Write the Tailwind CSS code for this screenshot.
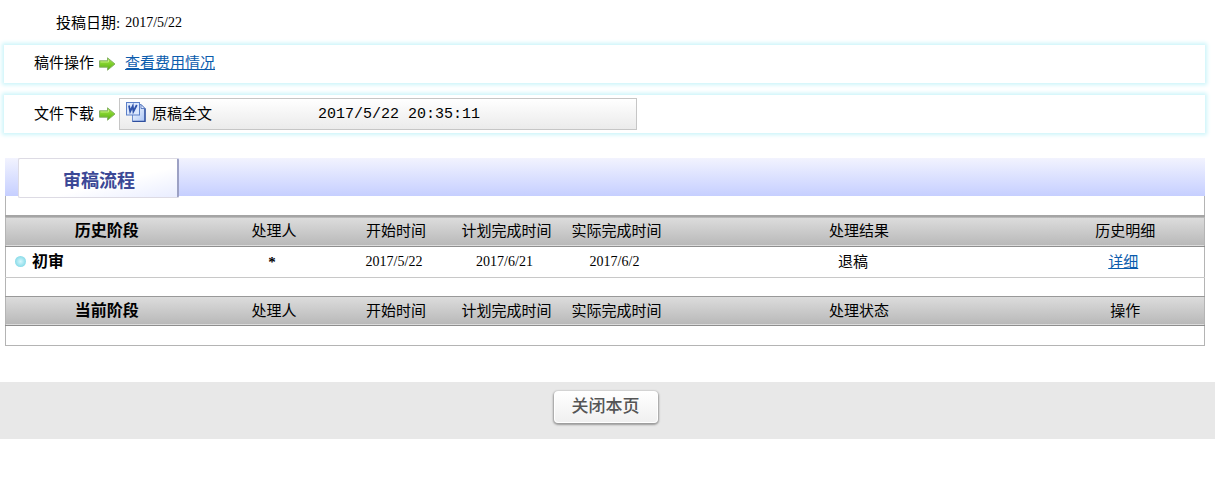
<!DOCTYPE html>
<html lang="zh-CN">
<head>
    <meta charset="UTF-8">
    <meta name="viewport" content="width=device-width, initial-scale=1.0">
    <title>审稿流程</title>
    <script src="https://cdn.jsdelivr.net/npm/@tailwindcss/browser@4"></script>
</head>
<body class="bg-white text-black text-[15px] leading-5 font-['Liberation_Serif','Noto_Sans_CJK_SC',serif]">
    <svg class="absolute size-0" aria-hidden="true">
        <defs>
            <linearGradient id="green" x1="0" y1="0" x2="0" y2="1">
                <stop offset="0" stop-color="#a5e04c"/>
                <stop offset="0.5" stop-color="#7fd02a"/>
                <stop offset="1" stop-color="#58a813"/>
            </linearGradient>
            <linearGradient id="paper" x1="0" y1="0" x2="1" y2="1">
                <stop offset="0" stop-color="#ffffff"/>
                <stop offset="1" stop-color="#a9c4f5"/>
            </linearGradient>
            <symbol id="arrow" viewBox="0 0 18 16">
                <path d="M1.5 4.8h8V1.8L17 8l-7.5 6.2v-3h-8z" fill="url(#green)" stroke="#86b366" stroke-linejoin="round"/>
                <path d="M2.5 6h8V3.8" fill="none" stroke="#cdf28e" stroke-width="0.8"/>
            </symbol>
        </defs>
    </svg>

    <!-- Submission date -->
    <div class="flex items-center h-[45px] pl-14 gap-[5px]">
        <span>投稿日期:</span>
        <span class="text-sm">2017/5/22</span>
    </div>

    <div class="flex flex-col gap-3 ml-1 mr-[10px]">
        <!-- Manuscript actions -->
        <div class="flex items-center h-[38px] pl-[30px] pb-[2px] shadow-[0_0_4px_2px_#cdf5fa]">
            <span>稿件操作</span>
            <svg class="w-[18px] h-4 ml-1 mt-[2px]" aria-hidden="true"><use href="#arrow"/></svg>
            <a href="#" class="ml-[9px] text-[#0b5cad] underline">查看费用情况</a>
        </div>

        <!-- File download -->
        <div class="flex items-center h-[38px] pl-[30px] shadow-[0_0_4px_2px_#cdf5fa]">
            <span>文件下载</span>
            <svg class="w-[18px] h-4 ml-1" aria-hidden="true"><use href="#arrow"/></svg>
            <div class="flex items-center w-[518px] h-8 ml-[3px] pl-[6px] border border-[#c6c6c6] bg-linear-to-b from-white to-[#ebebeb]">
                <svg class="w-5 h-5 mb-1" viewBox="0 0 20 20" aria-hidden="true">
                    <path d="M6.5 2.5h8.5l4 4v13H6.5z" fill="url(#paper)" stroke="#6f8fce"/>
                    <path d="M19 6.5v13H6.5" fill="none" stroke="#2f4f9e" stroke-width="1.4"/>
                    <path d="M15 2.5v4h4z" fill="#e4edff" stroke="#4468b5" stroke-width="0.8"/>
                    <rect x="0.5" y="0.5" width="13" height="12.5" fill="#dce8fd" stroke="#5c80c8"/>
                    <path d="M3 3.5l1.2 6 2.6-5.5.6 5.5 3.4-6.5" fill="none" stroke="#2f52aa" stroke-width="1.8"/>
                </svg>
                <div class="w-[172px] pl-[6px]">原稿全文</div>
                <div class="pt-[2px] font-['Liberation_Mono',monospace]">2017/5/22 20:35:11</div>
            </div>
        </div>
    </div>

    <!-- Review process -->
    <div class="ml-[5px] mr-[10px] mt-[25px]">
        <div class="flex h-[38px] pl-[13px] bg-linear-to-b from-[#f2f3fe] to-[#c6cfff]">
            <h2 class="w-[161px] h-10 pl-[2px] text-center text-lg leading-10 font-bold text-[#3b4896] font-['Noto_Sans_CJK_SC',sans-serif] border border-r-2 border-[#dddbe4] border-r-[#9ca1c4] rounded-xs bg-linear-to-br from-white from-60% to-[#e9edff]">审稿流程</h2>
        </div>
        <table class="w-full table-fixed border-collapse border border-t-0 border-[#b4b4b4] text-center">
            <colgroup>
                <col class="w-[202px]">
                <col class="w-[133px]">
                <col class="w-[111px]">
                <col class="w-[110px]">
                <col class="w-[110px]">
                <col>
                <col class="w-[158px]">
            </colgroup>
            <tbody>
                <tr class="h-5"><td colspan="7"></td></tr>
                <tr class="h-[30px] border-t-2 border-b border-t-[#a5a5a5] border-b-[#8e8e8e] bg-linear-to-b from-[#dcdcdc] to-[#b9b9b9]">
                    <th class="text-base leading-5 font-bold">历史阶段</th>
                    <th class="font-normal">处理人</th>
                    <th class="font-normal">开始时间</th>
                    <th class="font-normal">计划完成时间</th>
                    <th class="font-normal">实际完成时间</th>
                    <th class="font-normal">处理结果</th>
                    <th class="font-normal">历史明细</th>
                </tr>
                <tr class="h-[31px] border-b border-[#c8c8c8]">
                    <td class="pl-[9px]">
                        <div class="flex items-center gap-[6px] text-base leading-5 font-bold">
                            <span class="size-[11px] rounded-full bg-radial from-[#d4f7fc] to-[#63cfe0]"></span>初审
                        </div>
                    </td>
                    <td class="pr-1 font-bold">*</td>
                    <td class="pr-1 text-sm">2017/5/22</td>
                    <td class="pr-1 text-sm">2017/6/21</td>
                    <td class="pr-1 text-sm">2017/6/2</td>
                    <td class="pr-3">退稿</td>
                    <td class="pr-1"><a href="#" class="text-[#0b5cad] underline">详细</a></td>
                </tr>
                <tr class="h-[19px]"><td colspan="7"></td></tr>
                <tr class="h-[29px] border-t border-b border-t-[#999999] border-b-[#8e8e8e] bg-linear-to-b from-[#dcdcdc] to-[#b9b9b9]">
                    <th class="text-base leading-5 font-bold">当前阶段</th>
                    <th class="font-normal">处理人</th>
                    <th class="font-normal">开始时间</th>
                    <th class="font-normal">计划完成时间</th>
                    <th class="font-normal">实际完成时间</th>
                    <th class="font-normal">处理状态</th>
                    <th class="font-normal">操作</th>
                </tr>
                <tr class="h-5"><td colspan="7"></td></tr>
            </tbody>
        </table>
    </div>

    <!-- Footer -->
    <div class="flex justify-center items-center h-[57px] mt-9 pr-1 pb-[6px] bg-[#e8e8e8]">
        <button type="button" class="w-[104px] h-8 pb-1 rounded-sm border border-white bg-linear-to-b from-white to-[#f0f0f0] text-[17px] leading-5 font-medium text-[#555555] font-['Noto_Sans_CJK_SC',sans-serif] shadow-[0_1px_2px_1px_#9a9a9a]">关闭本页</button>
    </div>
</body>
</html>
